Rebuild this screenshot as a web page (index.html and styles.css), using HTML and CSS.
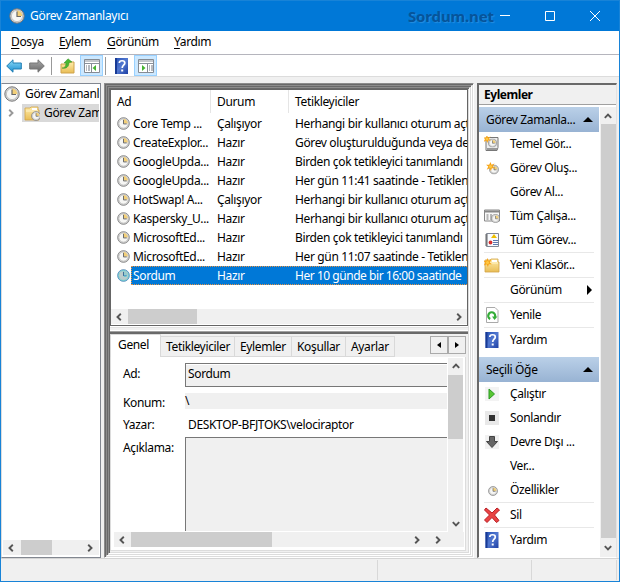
FILE: index.html
```html
<!DOCTYPE html>
<html lang="tr">
<head>
<meta charset="utf-8">
<title>Görev Zamanlayıcı</title>
<link rel="stylesheet" href="styles.css">
</head>
<body>
<svg class="defs" aria-hidden="true">
  <defs>
    <linearGradient id="gold" x1="0" y1="0" x2="0" y2="1"><stop offset="0" stop-color="#ffedac"/><stop offset="1" stop-color="#e9bd55"/></linearGradient>
    <linearGradient id="blue" x1="0" y1="0" x2="1" y2="1"><stop offset="0" stop-color="#2450b5"/><stop offset=".5" stop-color="#5278d0"/><stop offset="1" stop-color="#1d3fa3"/></linearGradient>
    <linearGradient id="sky" x1="0" y1="0" x2="0" y2="1"><stop offset="0" stop-color="#8fdcf8"/><stop offset="1" stop-color="#168bd0"/></linearGradient>
    <linearGradient id="steel" x1="0" y1="0" x2="0" y2="1"><stop offset="0" stop-color="#aaa"/><stop offset="1" stop-color="#686868"/></linearGradient>
  </defs>
  <symbol id="clock" viewBox="0 0 16 16"><circle cx="8" cy="8" r="7.2" fill="#d5d5d5" stroke="#777"/><circle cx="8" cy="8" r="5.6" fill="#f6f6f4" stroke="#aaa" stroke-width=".6"/><path d="M8 8V2.6A5.4 5.4 0 0 1 13.4 8z" fill="#f2cf78"/><path d="M8 3.5V8.5H12" fill="none" stroke="#686868" stroke-width="1.2"/></symbol>
  <symbol id="help" viewBox="0 0 13 16"><path d="M0 0h13v16H0z" fill="url(#blue)"/><path d="M0 0h2v16H0z" fill="#183a95"/><path d="M4.3 5C4.3 2 9.8 2 9.8 5 9.8 7.2 7.2 7.3 7.2 10" fill="none" stroke="#fff" stroke-width="1.7"/><path d="M6.2 11.5h2v2h-2z" fill="#fff"/></symbol>
  <symbol id="folder" viewBox="0 0 16 16"><path d="M1 3h5l1-1h7v3h1v10H1z" fill="url(#gold)" stroke="#d2a348" stroke-width=".8"/><path d="M8 3h5v2H8z" fill="#fff"/><path d="M2 6h12" stroke="#fff3c6"/></symbol>
  <symbol id="star" viewBox="0 0 10 10"><path d="M5 0 6.2 3 9.5 1.8 7.5 5 10 7 6.5 7 5.5 10 4 7 .8 8.5 2.5 5 0 3 3.5 3z" fill="#f7a51b"/><circle cx="5" cy="5" r="1.7" fill="#ffc840"/></symbol>
  <symbol id="newfolder" viewBox="0 0 16 16"><use href="#folder"/><use href="#star" x="-1" y="1" width="9" height="9"/></symbol>
  <symbol id="basic" viewBox="0 0 16 16"><path d="M2 1.5h12v10l-1 3H2z" fill="#eee" stroke="#777"/><path d="M3 13h10" stroke="#999" stroke-width="2"/><use href="#clock" x="4" y="2.500" width="9" height="9"/><use href="#star" x="-1" y="-1" width="8" height="8"/></symbol>
  <symbol id="create" viewBox="0 0 16 16"><use href="#clock" x="5" y="4.500" width="10" height="10"/><use href="#star" x="2" y="2" width="9" height="9"/></symbol>
  <symbol id="running" viewBox="0 0 16 16"><path d="M.5 2h15v11H.5z" fill="#f8f8f8" stroke="#888"/><path d="M1 3.500h14" stroke="#888" stroke-width="2"/><path d="M2.500 7h2m1.500 0h2M2.500 9h2m1.500 0h2M2.500 11h2m1.500 0h2" stroke="#777"/><use href="#clock" x="7" y="6" width="9" height="9"/></symbol>
  <symbol id="history" viewBox="0 0 16 16"><path d="M2.500 1.500h12v13h-12z" fill="#f8fbff" stroke="#808795"/><path d="M1 3h3M1 5h3M1 7h3M1 9h3M1 11h3M1 13h3" stroke="#666"/><path d="M10 2l3 4H7z" fill="#eebf00"/><path d="M9 8.500h5M9 10.500h5M9 12.500h5" stroke="#5c78ae"/><circle cx="6.500" cy="10.500" r="1.900" fill="#d72f2f"/></symbol>
  <symbol id="refresh" viewBox="0 0 16 16"><path d="M2.500.5h8.500l3 3v12H2.500z" fill="#fff" stroke="#aaa"/><path d="M6.200 12A3.500 3.500 0 1 1 11 10" fill="none" stroke="#35ad39" stroke-width="2.200"/><path d="M8 9.500h5.500L10.500 13z" fill="#35ad39"/></symbol>
  <symbol id="up" viewBox="0 0 16 16"><path d="M1 6h6V4h7v11H1z" fill="url(#gold)" stroke="#cfa34c"/><path d="M2 10C5 10 6 8 6 5L4 5 8 .8 12 4 9 4.500C9 9 6 11 2 10z" fill="#49b832" stroke="#348c27" stroke-width=".5"/></symbol>
  <symbol id="tree" viewBox="0 0 16 14"><path d="M.5.500h15v13H.5z" fill="#fff" stroke="#858b93"/><path d="M1 2h14M1 4.500h14" stroke="#89919b"/><path d="M7.500 5v8" stroke="#858b93"/><path d="M2 7h1m1 0h2M2 9h1m1 0h2M2 11h1m1 0h2" stroke="#707780"/><path d="M12 6v6L8.500 9z" fill="#45b432"/></symbol>
  <symbol id="pane" viewBox="0 0 16 14"><path d="M.5.500h15v13H.5z" fill="#fff" stroke="#858b93"/><path d="M1 2h14M1 4.500h14" stroke="#89919b"/><path d="M9.500 5v8" stroke="#858b93"/><path d="M11 7h1m1 0h2M11 9h1m1 0h2M11 11h1m1 0h2" stroke="#707780"/><path d="M4 6v6L7.500 9z" fill="#45b432"/></symbol>
  <symbol id="arrow" viewBox="0 0 16 14"><path d="M.7 7 7 .8V4h8.300v6H7v3.200z"/></symbol>
  <symbol id="chev" viewBox="0 0 8 8"><path d="M5.800.800 2.500 4l3.300 3.200" fill="none" stroke="#555" stroke-width="1.900"/></symbol>
  <symbol id="play" viewBox="0 0 14 14"><path d="M0 0h14v14H0z" fill="#f3f3f3"/><path d="M4 2l5.500 5L4 12z" fill="#59c632" stroke="#299922"/></symbol>
  <symbol id="stop" viewBox="0 0 14 14"><path d="M0 0h14v14H0z" fill="#e8e8e8"/><path d="M4 4h6v6H4z" fill="#303030"/></symbol>
  <symbol id="disable" viewBox="0 0 14 14"><path d="M0 0h14v14H0z" fill="#f1f1f1"/><path d="M4.500 1.500h5v5h3L7 12.500 1.500 6.500h3z" fill="#666" stroke="#444"/></symbol>
  <symbol id="delete" viewBox="0 0 16 16"><path d="M2 1 8 6 13 1 15.500 3 10.500 8 15 13.500 12.500 15.500 8 10.500 3 15.500.5 13 5.500 8 .5 3z" fill="#e94343" stroke="#b91e25"/></symbol>
</svg>

<div class="window">
  <header class="title"><svg class="i16"><use href="#clock"/></svg><span>Görev Zamanlayıcı</span><b class="mark">Sordum.net</b>
    <div class="controls"><svg viewBox="0 0 12 12"><path d="M1 5.500h10"/></svg><svg viewBox="0 0 12 12"><path d="M1.500 1.500h9v9h-9z"/></svg><svg viewBox="0 0 12 12"><path d="M1 1l10 10M11 1 1 11"/></svg></div>
  </header>
  <nav class="menu"><span><u>D</u>osya</span><span><u>E</u>ylem</span><span><u>G</u>örünüm</span><span><u>Y</u>ardım</span></nav>
  <div class="toolbar">
    <svg class="arrow back"><use href="#arrow"/></svg><svg class="arrow forward"><use href="#arrow"/></svg><i class="bar"></i>
    <svg class="i16 upicon"><use href="#up"/></svg><span class="pressed"><svg class="i16"><use href="#tree"/></svg></span><i class="bar second"></i>
    <svg class="helpicon"><use href="#help"/></svg><span class="pressed pane"><svg class="i16"><use href="#pane"/></svg></span>
  </div>
  <main>
    <aside class="treepane">
      <div class="root"><svg class="i16"><use href="#clock"/></svg><span>Görev Zamanl</span></div>
      <div class="branch"><svg class="chev right pale"><use href="#chev"/></svg><div class="treesel"><svg class="i16" viewBox="0 0 16 16"><use href="#folder"/><use href="#clock" x="7" y="6" width="10" height="10"/></svg><span>Görev Zam</span></div></div>
      <div class="hscroll treescroll"><svg class="chev"><use href="#chev"/></svg><i></i><svg class="chev right"><use href="#chev"/></svg></div>
    </aside>
    <section class="bevel"><div class="bevel"><div class="bevel">
      <div class="center">
        <div class="list">
          <div class="row head"><span class="name">Ad</span><span>Durum</span><span>Tetikleyiciler</span></div>
          <div class="rows">
            <div class="row"><svg class="small"><use href="#clock"/></svg><span>Core Temp ...</span><span>Çalışıyor</span><span>Herhangi bir kullanıcı oturum açtığında</span></div>
            <div class="row"><svg class="small"><use href="#clock"/></svg><span>CreateExplor...</span><span>Hazır</span><span>Görev oluşturulduğunda veya değiştirildiğinde</span></div>
            <div class="row"><svg class="small"><use href="#clock"/></svg><span>GoogleUpda...</span><span>Hazır</span><span>Birden çok tetikleyici tanımlandı</span></div>
            <div class="row"><svg class="small"><use href="#clock"/></svg><span>GoogleUpda...</span><span>Hazır</span><span>Her gün 11:41 saatinde - Tetiklendikten</span></div>
            <div class="row"><svg class="small"><use href="#clock"/></svg><span>HotSwap! A...</span><span>Çalışıyor</span><span>Herhangi bir kullanıcı oturum açtığında</span></div>
            <div class="row"><svg class="small"><use href="#clock"/></svg><span>Kaspersky_U...</span><span>Hazır</span><span>Herhangi bir kullanıcı oturum açtığında</span></div>
            <div class="row"><svg class="small"><use href="#clock"/></svg><span>MicrosoftEd...</span><span>Hazır</span><span>Birden çok tetikleyici tanımlandı</span></div>
            <div class="row"><svg class="small"><use href="#clock"/></svg><span>MicrosoftEd...</span><span>Hazır</span><span>Her gün 11:07 saatinde - Tetiklendikten</span></div>
            <div class="row selected"><svg class="small"><use href="#clock"/></svg><span>Sordum</span><span>Hazır</span><span>Her 10 günde bir 16:00 saatinde</span></div>
          </div>
          <div class="hscroll listscroll"><svg class="chev"><use href="#chev"/></svg><i></i><svg class="chev right"><use href="#chev"/></svg></div>
        </div>
        <div class="splitter"></div>
        <div class="details">
          <div class="tabs"><span class="active">Genel</span><span class="t1">Tetikleyiciler</span><span class="t2">Eylemler</span><span class="t3">Koşullar</span><span class="t4">Ayarlar</span><div class="spin"><b></b><b class="r"></b></div></div>
          <div class="page">
            <div class="formwrap">
              <div class="form"><label>Ad:</label><div class="input">Sordum</div><label class="loc">Konum:</label><div class="location">\</div><label class="author">Yazar:</label><div class="value">DESKTOP-BFJTOKS\velociraptor</div><label class="desc">Açıklama:</label><div class="area"></div></div>
              <div class="vscroll"><svg class="chev top"><use href="#chev"/></svg><i></i><svg class="chev bottom"><use href="#chev"/></svg></div>
            </div>
            <div class="hscroll formscroll"><svg class="chev"><use href="#chev"/></svg><i></i><svg class="chev right one"><use href="#chev"/></svg><svg class="chev right"><use href="#chev"/></svg></div>
          </div>
        </div>
      </div>
    </div></div></section>
    <aside class="actions">
      <h2>Eylemler</h2>
      <div class="actionbody">
        <div class="items">
          <h3><span>Görev Zamanla...</span><i></i></h3>
          <div class="action"><svg><use href="#basic"/></svg><span>Temel Gör...</span></div>
          <div class="action"><svg><use href="#create"/></svg><span>Görev Oluş...</span></div>
          <div class="action"><svg></svg><span>Görev Al...</span></div>
          <div class="action"><svg><use href="#running"/></svg><span>Tüm Çalışa...</span></div>
          <div class="action"><svg><use href="#history"/></svg><span>Tüm Görev...</span></div><hr>
          <div class="action"><svg><use href="#newfolder"/></svg><span>Yeni Klasör...</span></div><hr>
          <div class="action"><svg></svg><span>Görünüm</span><i class="more"></i></div><hr>
          <div class="action"><svg><use href="#refresh"/></svg><span>Yenile</span></div><hr>
          <div class="action"><svg><use href="#help"/></svg><span>Yardım</span></div>
          <h3 class="item-head"><span>Seçili Öğe</span><i></i></h3>
          <div class="action"><svg><use href="#play" x="1" y="1" width="14" height="14"/></svg><span>Çalıştır</span></div>
          <div class="action"><svg><use href="#stop" x="1" y="1" width="14" height="14"/></svg><span>Sonlandır</span></div>
          <div class="action"><svg><use href="#disable" x="1" y="1" width="14" height="14"/></svg><span>Devre Dışı ...</span></div>
          <div class="action"><svg></svg><span>Ver...</span></div>
          <div class="action"><svg><use href="#clock" x="4" y="4" width="10" height="10"/></svg><span>Özellikler</span></div><hr>
          <div class="action"><svg><use href="#delete"/></svg><span>Sil</span></div><hr>
          <div class="action"><svg><use href="#help"/></svg><span>Yardım</span></div>
        </div>
        <div class="vscroll side"><svg class="chev top"><use href="#chev"/></svg><i></i><svg class="chev bottom"><use href="#chev"/></svg></div>
      </div>
    </aside>
  </main>
  <footer><i></i><i></i><i></i></footer>
</div>
</body>
</html>
```
FILE: styles.css
```css
* { box-sizing: border-box; }
body { margin: 0; font: 12px/18px "Noto Sans", sans-serif; letter-spacing: -.35px; color: #000; overflow: hidden; }
.defs { position: absolute; width: 0; height: 0; }
svg { display: block; flex: none; }
.i16 { width: 16px; height: 16px; }
.window { width: 620px; height: 582px; border: 1px solid #1883d7; background: #f0f0f0; display: flex; flex-direction: column; }
.title { height: 30px; flex: none; background: #0078d7; color: #fff; display: flex; align-items: center; padding-left: 8px; }
.title > span { margin-left: 5px; width: 120px; letter-spacing: -.3px; }
.mark { margin-left: 258px; font-size: 15px; letter-spacing: -.15px; color: #06549a; text-shadow: 1px 1px 1px #238ee0; width: 90px; white-space: nowrap; }
.controls { display: flex; gap: 33px; margin-left: 1px; }
.controls svg { width: 12px; height: 12px; fill: none; stroke: #fff; }
.menu { height: 24px; flex: none; background: #fff; border-bottom: 1px solid #b5b5bd; padding: 2px 10px 0; display: flex; }
.menu span:nth-child(1) { width: 48px; }
.menu span:nth-child(2) { width: 48px; }
.menu span:nth-child(3) { width: 67px; }
.menu u { text-underline-offset: 2px; }
.toolbar { height: 22px; flex: none; background: #fff; border-bottom: 1px solid #dcdcdc; display: flex; align-items: center; padding-left: 5px; }
.arrow { width: 16px; height: 14px; }
.back { fill: url(#sky); stroke: #207eb3; }
.forward { fill: url(#steel); stroke: #777; margin-left: 7px; transform: scaleX(-1); }
.bar { width: 1px; height: 18px; background: #999; margin-left: 6px; }
.upicon { margin-left: 8px; }
.pressed { width: 23px; height: 21px; background: #cce8ff; border: 1px solid #99d1ff; margin-left: 4px; display: flex; align-items: center; justify-content: center; }
.bar.second { margin-left: 2px; }
.helpicon { width: 13px; height: 16px; margin-left: 9px; }
.pressed.pane { margin-left: 6px; }
main { height: 475px; margin-top: 6px; display: flex; flex: none; }
.treepane { width: 100px; height: 475px; border: 1px solid #828790; border-left-color: #ddd; background: #fff; display: flex; flex-direction: column; overflow: hidden; white-space: nowrap; }
.root { display: flex; align-items: center; height: 18px; padding-left: 2px; margin-top: 1px; }
.root span { margin-left: 5px; }
.branch { display: flex; height: 18px; margin-top: 1px; align-items: center; padding-left: 5px; }
.treesel { display: flex; align-items: center; background: #d9d9d9; height: 18px; width: 77px; margin-left: 7px; padding-left: 2px; overflow: hidden; }
.treesel span { margin-left: 4px; }
.hscroll { height: 15px; display: flex; align-items: center; background: #f0f0f0; flex: none; }
.hscroll i { background: #cdcdcd; height: 15px; }
.chev { width: 8px; height: 8px; flex: none; }
.right { transform: rotate(180deg); }
.top { transform: rotate(90deg); }
.bottom { transform: rotate(-90deg); }
.pale { opacity: .6; }
.treescroll { margin: auto 1px 2px; padding: 0 5px 0 4px; }
.treescroll i { width: 31px; margin: 0 auto 0 6px; }
.bevel { border: 1px solid; border-color: #8c8c8c #fff #fff #8c8c8c; box-shadow: inset 1px 1px #696969, inset -1px -1px #dcdcdc; padding: 1px; }
section.bevel { width: 370px; height: 475px; margin-left: 3px; flex: none; }
.bevel > .bevel { width: 100%; height: 100%; }
.center { height: 463px; width: 358px; }
.list { height: 237px; border: 1px solid #656565; background: #fff; display: flex; flex-direction: column; overflow: hidden; }
.row { display: grid; grid-template-columns: 13px 79px 78px 1fr; height: 19px; align-items: center; padding-left: 6px; white-space: nowrap; }
.row > span { overflow: hidden; padding-left: 3px; }
.row > span:nth-child(3) { padding-left: 8px; }
.row > span:nth-child(4) { padding-left: 8px; }
.row.head { height: 23px; grid-template-columns: 100px 78px 1fr; padding-left: 0; align-items: stretch; line-height: 23px; }
.row.head span { padding-left: 6px; border-right: 1px solid #e5e5e5; }
.row.head span:last-child { border: 0; padding-left: 6px; }
.small { width: 13px; height: 13px; }
.rows { margin-top: 1px; }
.selected { color: #fff; background: linear-gradient(90deg, #fff 20px, #0078d7 20px); position: relative; }
.selected > span:last-child { letter-spacing: -.46px; }
.selected::after { content: ""; position: absolute; inset: 0 0 0 20px; border: 1px dotted #e59345; border-right: 0; }
.selected .small { filter: sepia(1) hue-rotate(165deg) saturate(2.4) brightness(.8); }
.listscroll { margin-top: auto; margin-bottom: 1px; padding: 0 4px; }
.listscroll i { width: 69px; margin: 0 auto 0 5px; }
.splitter { height: 6px; background: linear-gradient(#fff 0 1px, #e3e3e3 1px 2px, #f0f0f0 2px 4px, #fff 4px 5px, #a0a0a0 5px); }
.details { height: 220px; border-top: 2px solid #696969; padding-right: 2px; }
.tabs { height: 23px; display: flex; align-items: flex-end; white-space: nowrap; }
.tabs > span { height: 21px; border: 1px solid #d9d9d9; border-left: 0; padding-left: 5px; line-height: 20px; }
.tabs .active { height: 23px; width: 51px; background: #fff; border-bottom: 0; border-left: 1px solid #d9d9d9; padding-left: 7px; line-height: 20px; }
.t1 { width: 74px; } .t2 { width: 57px; } .t3 { width: 54px; } .t4 { width: 49px; }
.spin { display: flex; margin-left: auto; align-self: flex-start; margin-top: 2px; }
.spin b { width: 18px; height: 18px; border: 1px solid #aaa; display: grid; place-items: center; }
.spin b::before { content: ""; border: 3px solid transparent; border-right: 4px solid #000; border-left: 0; }
.spin .r::before { border-right: 0; border-left: 4px solid #000; }
.page { background: #fff; height: 194px; border: 1px solid #dcdcdc; border-top: 0; padding: 1px 1px 0 3px; }
.formwrap { height: 174px; display: flex; }
.form { width: 333px; display: grid; grid-template-columns: 62px 1fr; grid-template-rows: 34px 20px 25px 94px; padding-left: 9px; height: 174px; overflow: hidden; }
.input { margin-top: 5px; height: 24px; border: 1px solid #777; border-right: 0; background: #f0f0f0; padding-left: 2px; line-height: 20px; box-shadow: inset 0 1px #fff; }
.form label { padding-top: 7px; }
.form label.loc { padding-top: 2px; }
.form label.author { padding-top: 4px; }
.form label.desc { padding-top: 2px; }
.location { height: 16px; margin-top: 1px; background: #f0f0f0; line-height: 15px; }
.value { padding: 4px 0 0 3px; }
.area { background: #f0f0f0; border: solid #777; border-width: 1px 0 0 1px; }
.vscroll { width: 15px; display: flex; flex-direction: column; align-items: center; padding: 4px 0; background: #f0f0f0; }
.vscroll i { width: 15px; background: #cdcdcd; height: 64px; margin: 5px 0 auto; flex: none; }
.formwrap .vscroll { margin-left: 1px; }
.formscroll { padding: 0 22px 0 4px; }
.formscroll i { width: 141px; margin: 0 auto 0 5px; }
.formscroll .one { margin-right: 13px; }
.actions { width: 140px; height: 475px; margin-left: 3px; border: solid #696969; border-width: 2px 1px 1px 2px; border-right-color: #e3e3e3; border-bottom-color: #fff; background: #fff; }
h2, h3 { margin: 0; font-size: 12px; }
h2 { height: 20px; line-height: 20px; background: #f0f0f0; border-bottom: 1px solid #a0a0a0; padding-left: 5px; letter-spacing: -.45px; }
.actionbody { height: 450px; margin-top: 2px; display: flex; }
.items { width: 121px; }
h3 { height: 25px; background: linear-gradient(#bad0e8, #98b3d3); font-weight: 400; display: flex; align-items: center; justify-content: space-between; padding: 0 6px 0 7px; }
h3 i { border: 5px solid transparent; border-bottom: 5px solid #000; border-top: 0; }
h3.item-head { margin: 5px 0 0; }
.action { height: 24px; display: flex; align-items: center; padding-left: 5px; white-space: nowrap; }
.action svg { width: 16px; height: 16px; margin-right: 10px; }
.more { margin-left: auto; margin-right: 7px; border: 5px solid transparent; border-left: 5px solid #000; border-right: 0; }
hr { height: 1px; margin: 0 5px; border: 0; background: #e8e8e8; }
.side { height: 450px; margin-left: 1px; padding: 5px 0; width: 16px; }
.side i { width: 15px; height: 414px; margin-top: 4px; }
footer { height: 23px; border-top: 1px solid #d4d4d4; display: flex; padding: 1px 2px 0 0; }
footer i { height: 20px; border-right: 1px solid #d8d8d8; }
footer i:nth-child(1) { width: 377px; } footer i:nth-child(2) { width: 154px; } footer i:nth-child(3) { flex: 1; }
```
